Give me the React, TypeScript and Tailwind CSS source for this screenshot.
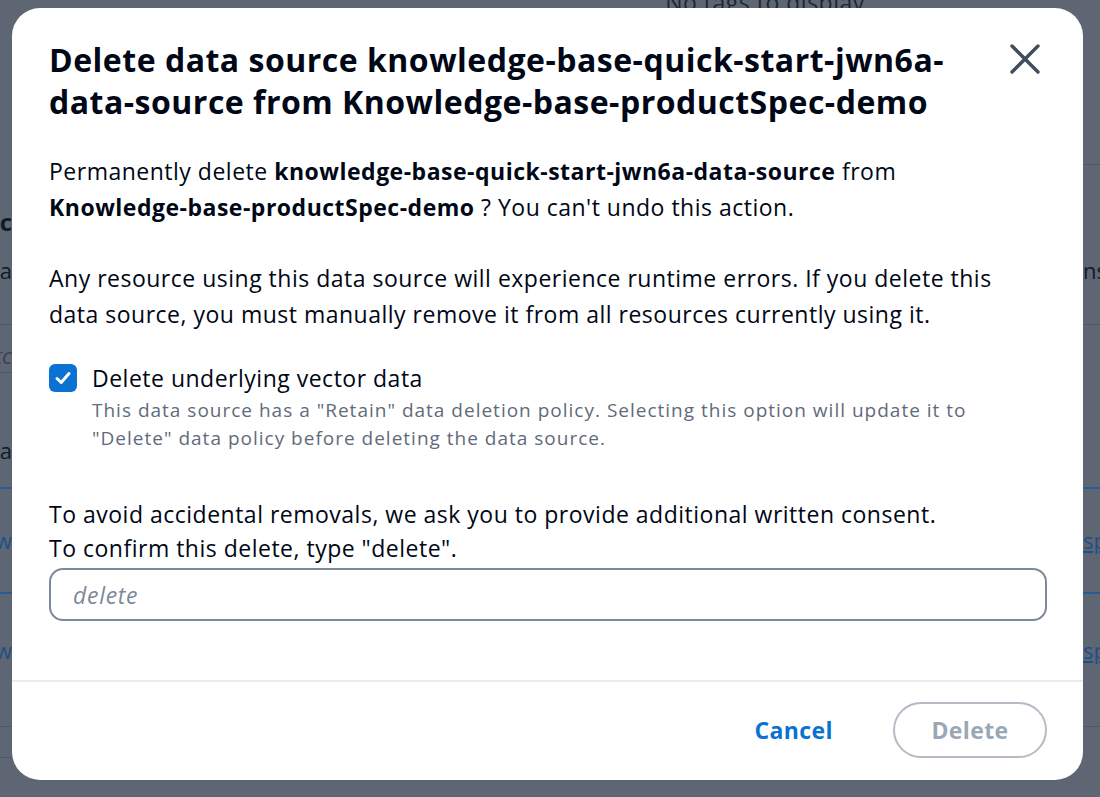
import React, { useState } from 'react';

const font = { fontFamily: '"Open Sans", "Noto Sans", sans-serif' };

const BackdropPage: React.FC = () => (
  <div className="flex flex-col w-full h-full text-[#0f1b2a]">
    <div className="h-[22px] flex justify-center pl-[430px]">
      <span className="text-[23px] leading-[22px] -mt-[9px] text-[#1d2634] tracking-[0.5px]">No tags to display</span>
    </div>
    <div className="h-[143px] border-b border-[#4f5664] ml-[1084px]" />
    <div className="flex h-[80px] pt-[42px]">
      <span className="w-[12px] overflow-hidden flex justify-end font-bold text-[24px] leading-[30px] whitespace-nowrap">
        <span className="shrink-0">Sourc</span>
      </span>
    </div>
    <div className="flex justify-between h-[80px] pt-[10px] border-b border-[#4f5664]">
      <span className="w-[12px] overflow-hidden flex justify-end text-[22px] leading-[30px] whitespace-nowrap">
        <span className="shrink-0">Data</span>
      </span>
      <span className="w-[17px] overflow-hidden text-[22px] leading-[30px] whitespace-nowrap">ns</span>
    </div>
    <div className="flex h-[48px] pt-[15px] border-b border-[#4f5664] mr-[1088px]">
      <span className="w-[12px] overflow-hidden flex justify-end text-[22px] leading-[30px] italic text-[#3a4250] whitespace-nowrap">
        <span className="shrink-0">etc</span>
      </span>
    </div>
    <div className="flex h-[114px] pt-[62px]">
      <span className="w-[12px] overflow-hidden flex justify-end text-[22px] leading-[30px] whitespace-nowrap">
        <span className="shrink-0">Data</span>
      </span>
    </div>
    <div className="h-[2px] bg-[#2d5a8f]" />
    <div className="flex justify-between h-[105px] items-center border-b-2 border-[#2d5a8f]">
      <span className="w-[12px] overflow-hidden flex justify-end text-[22px] text-[#1f4f87] whitespace-nowrap">
        <span className="shrink-0">ww</span>
      </span>
      <span className="w-[17px] overflow-hidden text-[22px] text-[#1f4f87] underline whitespace-nowrap">sp</span>
    </div>
    <div className="flex justify-between h-[133px] pt-[41px] border-b border-[#4f5664]">
      <span className="w-[12px] overflow-hidden flex justify-end text-[22px] leading-[30px] text-[#1f4f87] whitespace-nowrap">
        <span className="shrink-0">ww</span>
      </span>
      <span className="w-[17px] overflow-hidden text-[22px] leading-[30px] text-[#1f4f87] underline whitespace-nowrap">sp</span>
    </div>
    <div className="h-[31px] border-b border-[#4f5664] mr-[1088px]" />
  </div>
);

const App: React.FC = () => {
  const [checked, setChecked] = useState(true);
  const [value, setValue] = useState('');

  return (
    <div className="relative w-[1100px] h-[797px] overflow-hidden bg-[#5f6673]" style={font}>
      <BackdropPage />

      {/* Modal */}
      <div className="absolute left-[12px] top-[8px] w-[1071px] h-[772px] bg-white rounded-[28px] flex flex-col text-[#000716]">
        {/* Header */}
        <div className="flex items-start justify-between pl-[37px] pr-[40px] pt-[31px]">
          <h1 className="text-[32px] leading-[42px] font-bold tracking-[0.5px] w-[925px]">
            Delete data source knowledge-base-quick-start-jwn6a-data-source from Knowledge-base-productSpec-demo
          </h1>
          <button className="mt-[2px] w-[36px] h-[36px] flex items-center justify-center text-[#414d5c]" title="Close">
            <svg width="32" height="32" viewBox="0 0 32 32" fill="none" stroke="currentColor" strokeWidth="3.4" strokeLinecap="round">
              <path d="M3 3 L29 29" />
              <path d="M29 3 L3 29" />
            </svg>
          </button>
        </div>

        {/* Body */}
        <div className="flex flex-col px-[37px] pr-[36px] text-[23px] tracking-[0.5px]">
          <p className="mt-[30px] leading-[36px] max-w-[960px]">
            Permanently delete <b>knowledge-base-quick-start-jwn6a-data-source</b> from{' '}
            <b>Knowledge-base-productSpec-demo</b> ? You can't undo this action.
          </p>
          <p className="mt-[35px] leading-[36px] max-w-[960px]">
            Any resource using this data source will experience runtime errors. If you delete this data source,
            you must manually remove it from all resources currently using it.
          </p>

          <div className="mt-[31px] flex items-start gap-[15px]">
            <button
              onClick={() => setChecked(!checked)}
              className={`mt-[1px] w-[28px] h-[28px] rounded-[6px] flex items-center justify-center shrink-0 ${
                checked ? 'bg-[#0972d3]' : 'bg-white border-2 border-[#7d8998]'
              }`}
            >
              {checked && (
                <svg width="18" height="18" viewBox="0 0 18 18" fill="none" stroke="white" strokeWidth="3" strokeLinecap="round" strokeLinejoin="round">
                  <path d="M3 9.5 L7.2 13.5 L15 4.5" />
                </svg>
              )}
            </button>
            <div className="flex flex-col">
              <span className="leading-[30px]">Delete underlying vector data</span>
              <span className="mt-[3px] text-[19px] tracking-[1px] leading-[28px] text-[#5f6b7a]">
                This data source has a "Retain" data deletion policy. Selecting this option will update it to
                <br />
                "Delete" data policy before deleting the data source.
              </span>
            </div>
          </div>

          <p className="mt-[45px] leading-[34px]">
            To avoid accidental removals, we ask you to provide additional written consent.
            <br />
            To confirm this delete, type "delete".
          </p>
          <input
            value={value}
            onChange={(e) => setValue(e.target.value)}
            placeholder="delete"
            className="mt-[3px] h-[53px] w-full rounded-[14px] border-2 border-[#7d8998] px-[22px] text-[23px] tracking-[0.7px] outline-none placeholder:italic placeholder:text-[#7d8998]"
          />
        </div>

        <div className="mt-[59px] h-[2px] bg-[#e9ebed]" />

        {/* Footer */}
        <div className="flex-1 flex items-center justify-end gap-[60px] pr-[36px] pb-[2px]">
          <button className="text-[23px] tracking-[0.4px] font-bold text-[#0972d3]">Cancel</button>
          <button
            disabled={value !== 'delete'}
            className="w-[154px] h-[56px] rounded-full border-2 border-[#b4bbc4] text-[23px] tracking-[0.4px] font-bold text-[#9ba7b6]"
          >
            Delete
          </button>
        </div>
      </div>
    </div>
  );
};

export default App;
